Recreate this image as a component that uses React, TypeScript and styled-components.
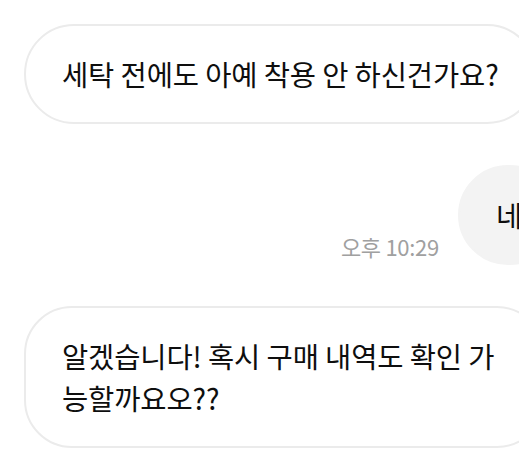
import styled, { createGlobalStyle } from 'styled-components'

const GlobalStyle = createGlobalStyle`
  html, body {
    margin: 0;
    padding: 0;
    background: #ffffff;
  }
  body {
    font-family: 'Noto Sans CJK KR', 'Noto Sans', sans-serif;
  }
`

const ChatWrapper = styled.div`
  width: 519px;
  height: 464px;
  overflow: hidden;
  padding-top: 24px;
  box-sizing: border-box;
  display: flex;
  flex-direction: column;
  gap: 41px;
`

const Row = styled.div<{ mine?: boolean }>`
  display: flex;
  align-items: flex-end;
  justify-content: ${p => (p.mine ? 'flex-end' : 'flex-start')};
  padding-left: ${p => (p.mine ? 0 : 24)}px;
  gap: 19px;
`

const Bubble = styled.div<{ mine?: boolean; multiline?: boolean }>`
  flex-shrink: 0;
  box-sizing: border-box;
  min-height: 100px;
  padding: ${p => (p.multiline ? '27px 36px' : '0 36px')};
  display: flex;
  align-items: center;
  border-radius: ${p => (p.multiline ? 48 : 50)}px;
  border: 2px solid ${p => (p.mine ? '#f3f3f3' : '#ebebeb')};
  background: ${p => (p.mine ? '#f3f3f3' : '#ffffff')};
  color: #0e0e0e;
  font-size: 28.5px;
  font-weight: 400;
  line-height: 42px;
  letter-spacing: -0.1px;
  white-space: ${p => (p.multiline ? 'normal' : 'nowrap')};
  width: ${p => (p.multiline ? '521px' : 'auto')};
  margin-right: ${p => (p.mine ? -41 : 0)}px;
`

const Time = styled.span`
  font-size: 22px;
  color: #a0a0a0;
  line-height: 1;
  padding-bottom: 8px;
  letter-spacing: -0.3px;
`

export default function App() {
  return (
    <>
      <GlobalStyle />
      <ChatWrapper>
        <Row>
          <Bubble>세탁 전에도 아예 착용 안 하신건가요?</Bubble>
        </Row>
        <Row mine>
          <Time>오후 10:29</Time>
          <Bubble mine>네</Bubble>
        </Row>
        <Row>
          <Bubble multiline>알겠습니다! 혹시 구매 내역도 확인 가능할까요오??</Bubble>
        </Row>
      </ChatWrapper>
    </>
  )
}
